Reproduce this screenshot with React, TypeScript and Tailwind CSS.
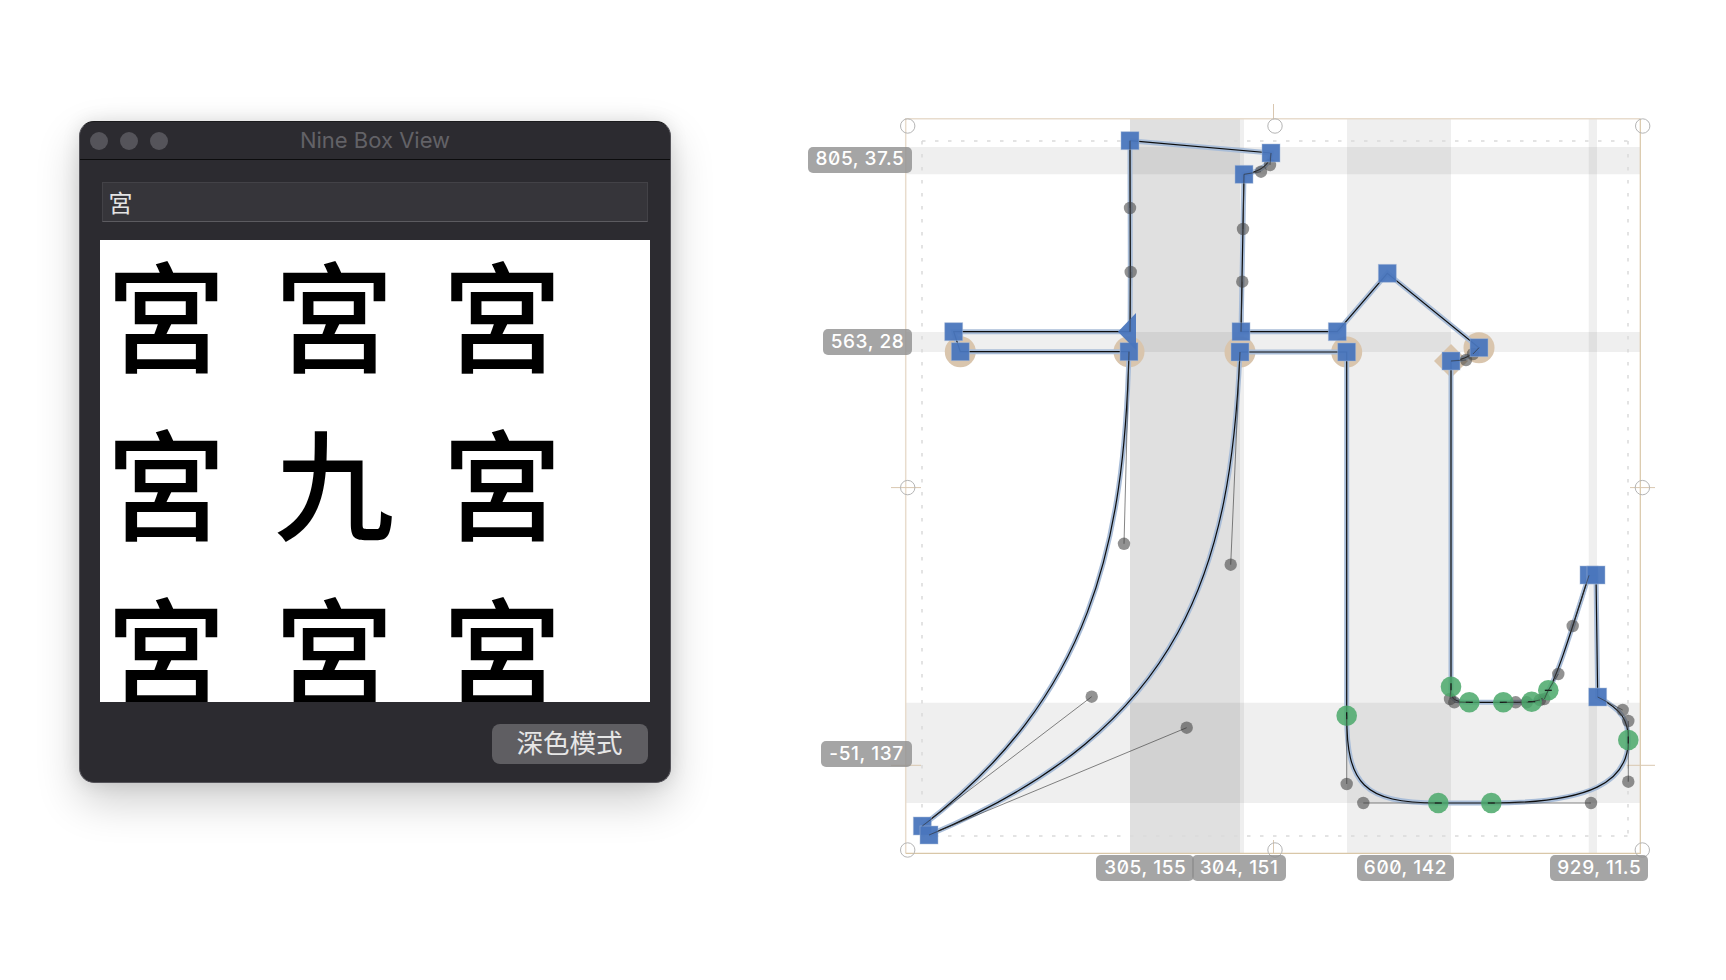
const CJK = "font-['Noto_Sans_CJK_TC','Noto_Sans_CJK_SC',sans-serif]";

const grid = ["宮", "宮", "宮", "宮", "九", "宮", "宮", "宮", "宮"];

function NineBoxWindow() {
  return (
    <div className="ml-[79px] mt-[121px] flex h-[662px] w-[592px] shrink-0 flex-col overflow-hidden rounded-[15px] border-[1.5px] border-[#55545a] border-t-[#1b1b1d] bg-[#2c2b30] shadow-[0_18px_44px_rgba(0,0,0,0.2),0_0_18px_rgba(0,0,0,0.1)]">
      <div className="relative flex h-[38px] shrink-0 items-center justify-center border-b border-[#0c0c0d] pb-[2px]">
        <div className="absolute left-[10px] top-[10px] flex gap-[12px]">
          <span className="h-[18px] w-[18px] rounded-full bg-[#55545a]" />
          <span className="h-[18px] w-[18px] rounded-full bg-[#55545a]" />
          <span className="h-[18px] w-[18px] rounded-full bg-[#55545a]" />
        </div>
        <span className="font-['Inter',sans-serif] text-[22px] leading-none text-[#636267]">Nine Box View</span>
      </div>

      <div className={`ml-[21.5px] mr-[22.5px] mt-[22px] flex h-[40px] shrink-0 items-center border border-[#434247] border-b-[#5c5b60] bg-[#36353a] pl-[6px] text-[24px] leading-none text-[#e4e4e4] ${CJK}`}>
        宮
      </div>

      <div className="ml-[19.5px] mt-[18px] h-[462px] w-[550px] shrink-0 overflow-hidden bg-white pl-[6.5px]">
        <div className={`grid grid-cols-[repeat(3,168px)] auto-rows-[168px] text-[120px] font-medium leading-[144px] text-black ${CJK}`}>
          {grid.map((c, i) => (
            <div key={i} className="w-[120px]">{c}</div>
          ))}
        </div>
      </div>

      <div className="mr-[22.5px] mt-[22px] flex justify-end">
        <div className={`flex h-[40px] w-[156px] items-center justify-center rounded-[8px] bg-[#5f5e62] pb-[4px] text-[26.5px] leading-none text-[#e6e6e6] ${CJK}`}>
          深色模式
        </div>
      </div>
    </div>
  );
}

const outline =
  "M1130,140.7 L1271,153 C1270,165 1261,171.7 1244,174.3 C1243,229 1242.3,281.7 1241,331.7 L1337.3,331.7 L1387.3,273.3 L1479,347.7 C1473,354 1466,360 1451,361 L1451,686.7 C1450,699 1454.3,702.3 1469.3,702.3 L1503.3,702.3 C1515.7,702.3 1526.7,702.3 1531.7,701.7 C1540,700 1544.3,699 1548.3,690.3 C1558.3,674 1572.7,626 1589,575.3 L1596,575 L1597.7,697 C1622.7,710 1628.3,721 1628.3,740 C1628.3,781.7 1591,803 1491.3,803 L1438.3,803 C1363.3,803 1346.7,784 1346.7,715.7 L1346.7,352 L1240,352 C1230.7,564.7 1186.7,727.7 929,835 M922.3,826 C1091.7,696.7 1124,543.8 1129,351.7 L960.3,351.7 L953.7,331.7 L1130,331.7 C1130.7,272 1130,208 1130,140.7";

const squares = [
  [1130, 140.7], [1271, 153], [1244, 174.3], [1241, 331.7], [1337.3, 331.7], [1387.3, 273.3],
  [1479, 347.7], [1451, 361], [1589, 575], [1596, 575], [1597.7, 697], [922.3, 826], [929, 835],
  [953.7, 331.7], [960.3, 351.7], [1129, 351.7], [1240, 352], [1346.7, 352],
];
const beige = [[960.3, 351.7], [1129, 351.7], [1240, 352], [1346.7, 352], [1479, 347.7]];
const greens = [
  [1451, 686.7], [1469.3, 702.3], [1503.3, 702.3], [1531.7, 701.7], [1548.3, 690.3],
  [1628.3, 740], [1491.3, 803], [1438.3, 803], [1346.7, 715.7],
];
// node x, node y, handle x, handle y
const handles = [
  [1271, 153, 1270, 165], [1244, 174.3, 1261, 171.7],
  [1244, 174.3, 1243, 229], [1241, 331.7, 1242.3, 281.7],
  [1479, 347.7, 1473, 354], [1451, 361, 1466, 360],
  [1451, 686.7, 1450, 699], [1469.3, 702.3, 1454.3, 702.3],
  [1503.3, 702.3, 1515.7, 702.3], [1531.7, 701.7, 1526.7, 702.3],
  [1531.7, 701.7, 1540, 700], [1548.3, 690.3, 1544.3, 699],
  [1548.3, 690.3, 1558.3, 674], [1589, 575.3, 1572.7, 626],
  [1597.7, 697, 1622.7, 710], [1628.3, 740, 1628.3, 721],
  [1628.3, 740, 1628.3, 781.7], [1491.3, 803, 1591, 803],
  [1438.3, 803, 1363.3, 803], [1346.7, 715.7, 1346.7, 784],
  [1240, 352, 1230.7, 564.7], [929, 835, 1186.7, 727.7],
  [922.3, 826, 1091.7, 696.7], [1129, 351.7, 1124, 543.8],
  [1130, 331.7, 1130.7, 272], [1130, 140.7, 1130, 208],
];
const guides = [
  [907.7, 126], [1275, 126], [1642.7, 126], [907.7, 487.6], [1642.4, 487.6],
  [907.7, 850], [1275, 850], [1642.3, 850],
];
const hBands = [[147, 27.3], [332, 20], [702.7, 100.3]];
const vBands = [[1130, 110], [1130, 114], [1347, 104], [1588.7, 8.3]];

const labels = [
  { text: "805, 37.5", left: 8.3, top: 146.7, w: 103.4 },
  { text: "563, 28", left: 23.3, top: 329, w: 88.4 },
  { text: "-51, 137", left: 21.3, top: 741, w: 90.4 },
  { text: "305, 155", left: 296.3, top: 855, w: 98 },
  { text: "304, 151", left: 392, top: 855, w: 94 },
  { text: "600, 142", left: 556.7, top: 855, w: 97.6 },
  { text: "929, 11.5", left: 750.3, top: 855, w: 98 },
];

function GlyphEditor() {
  return (
    <div className="relative ml-[129px] h-[980px] w-[926px] shrink-0">
      <svg width={926} height={980} viewBox="800 0 926 980" className="block">
        {hBands.map(([y, h]) => (
          <rect key={y} x={906} y={y} width={734.3} height={h} fill="#000" fillOpacity={0.063} />
        ))}
        {vBands.map(([x, w]) => (
          <rect key={`${x}-${w}`} x={x} y={119} width={w} height={734.3} fill="#000" fillOpacity={0.063} />
        ))}

        <g fill="none" stroke="#dadada" strokeWidth={1.5} strokeDasharray="3.5 9.5">
          <path d="M922,141 H1628" />
          <path d="M922,836 H1628" />
          <path d="M922,141 V836" />
          <path d="M1628,141 V836" />
        </g>

        <g fill="none" strokeWidth={1}>
          <path d="M905.7,853.3 V118.7 H1640.3" stroke="#e8dccd" strokeWidth={1.5} />
          <path d="M905.7,853.3 H1640.3 V118.7" stroke="#d9c7a8" strokeWidth={1.2} />
          <path d="M1273.5,104 V119 M1273.5,840 V853 M891,765.3 H921 M1626.7,765.3 H1655 M891,487.6 H921 M1630,487.6 H1655" stroke="#d9c7b0" />
          {guides.map(([x, y]) => (
            <circle key={`${x}-${y}`} cx={x} cy={y} r={7.2} stroke="#b5b5b5" />
          ))}
        </g>

        {beige.map(([x, y]) => (
          <circle key={x} cx={x} cy={y} r={15.5} fill="#d9c5ad" />
        ))}
        <polygon points="1451,344 1468,361 1451,378 1434,361" fill="#d9c5ad" />

        <path d={outline} fill="none" stroke="#a9bdd8" strokeWidth={5} />
        <path d={outline} fill="none" stroke="#0d0d0d" strokeWidth={1.2} />

        {handles.map(([x1, y1, x2, y2]) => (
          <circle key={`${x2}-${y2}`} cx={x2} cy={y2} r={6.2} fill="#444" fillOpacity={0.58} />
        ))}

        {squares.map(([x, y]) => (
          <rect key={`${x}-${y}`} x={x - 9} y={y - 9} width={18} height={18} fill="#4a76bd" fillOpacity={0.95} stroke="#a9bdd8" strokeOpacity={0.6} strokeWidth={0.8} />
        ))}
        <polygon points="1118,331.7 1136,313 1136,350" fill="#4a76bd" fillOpacity={0.95} />

        {greens.map(([x, y]) => (
          <g key={`${x}-${y}`}>
            <circle cx={x} cy={y} r={10.3} fill="#4aa86a" fillOpacity={0.85} />
            <path
              d={x === 1451 || x === 1346.7 || x === 1628.3 ? `M${x},${y - 3.5} V${y + 3.5}` : `M${x - 3.5},${y} H${x + 3.5}`}
              stroke="#111"
              strokeWidth={1.2}
            />
          </g>
        ))}

        {handles.map(([x1, y1, x2, y2]) => (
          <line key={`${x1}-${y1}-${x2}`} x1={x1} y1={y1} x2={x2} y2={y2} stroke="#333" strokeWidth={0.6} />
        ))}
      </svg>

      {labels.map((l) => (
        <div
          key={l.text}
          className="absolute flex h-[26px] items-center justify-center rounded-[5px] bg-[#8f8f8f]/80 pb-[2px] font-['Inter',sans-serif] text-[19px] font-medium leading-none tracking-[0.03em] text-white slashed-zero"
          style={{ left: l.left, top: l.top, width: l.w }}
        >
          {l.text}
        </div>
      ))}
    </div>
  );
}

export default function App() {
  return (
    <div className="flex h-[980px] w-[1726px] items-start overflow-hidden bg-white">
      <NineBoxWindow />
      <GlyphEditor />
    </div>
  );
}
